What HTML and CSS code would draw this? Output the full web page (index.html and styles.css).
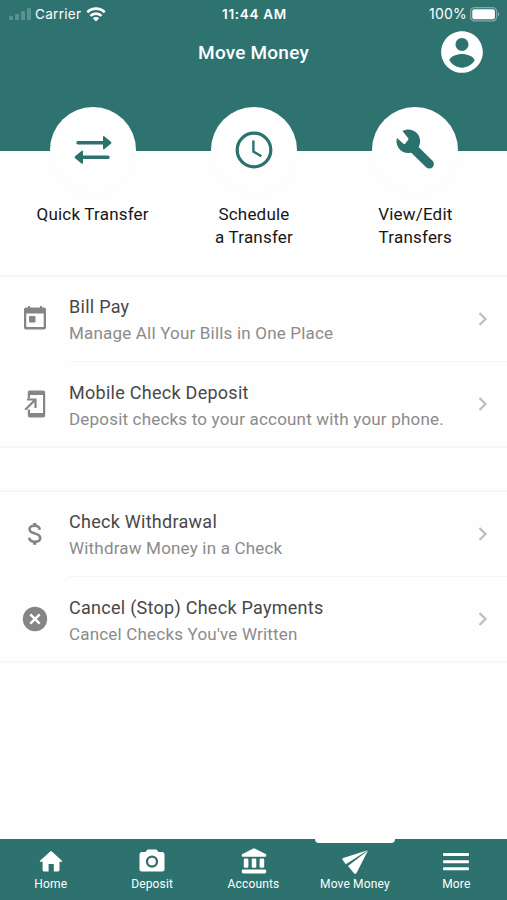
FILE: index.html
```html
<!DOCTYPE html>
<html lang="en">
<head>
  <meta charset="UTF-8" />
  <meta name="viewport" content="width=device-width, initial-scale=1" />
  <title>Move Money</title>
  <link rel="stylesheet" href="styles.css">
</head>
<body>

<div class="app">
  <header class="hero">
    <div class="status-bar">
      <div class="status-left">
        <svg class="signal" width="22" height="14" viewBox="0 0 22 14">
          <rect x="0" y="9" width="4" height="4" rx="1" />
          <rect x="6" y="7" width="4" height="6" rx="1" />
          <rect x="12" y="4" width="4" height="9" rx="1" />
          <rect x="18" y="1" width="4" height="12" rx="1" />
        </svg>
        <span class="carrier">Carrier</span>
        <svg class="wifi" width="20" height="15" viewBox="0 0 20 15" fill="none" stroke="#fff" stroke-width="2.7">
          <path d="M1.3 5.2a12.4 12.4 0 0 1 17.4 0" />
          <path d="M4.5 8.9a7.8 7.8 0 0 1 11 0" />
          <path d="M10 14.5l-3.2-3.3a4.6 4.6 0 0 1 6.4 0z" fill="#fff" stroke="none" />
        </svg>
      </div>
      <span class="time">11:44 AM</span>
      <div class="status-right">
        <span class="percent">100%</span>
        <svg class="battery" width="30" height="15" viewBox="0 0 30 15">
          <rect x=".6" y=".6" width="26" height="13.3" rx="4" fill="none" stroke="#82aba8" stroke-width="1.2" />
          <rect x="2.3" y="2.3" width="22.6" height="9.9" rx="2" fill="#fff" />
          <path d="M28 5a2.6 2.6 0 0 1 0 4.6z" fill="#82aba8" />
        </svg>
      </div>
    </div>
    <div class="title-bar">
      <h1>Move Money</h1>
      <svg class="avatar" width="50" height="50" viewBox="0 0 24 24" fill="#fff">
        <path d="M12 2C6.48 2 2 6.48 2 12s4.48 10 10 10 10-4.48 10-10S17.52 2 12 2zm0 3.3c1.7 0 3.1 1.4 3.1 3.1s-1.4 3.1-3.1 3.1-3.1-1.4-3.1-3.1S10.3 5.3 12 5.3zm0 14.2c-2.5 0-4.9-1.4-6.1-3.5.4-2 3.7-3.1 6.1-3.1s5.7 1.1 6.1 3.1c-1.2 2.1-3.6 3.5-6.1 3.5z" />
      </svg>
    </div>
  </header>

  <section class="actions">
    <a class="action" href="#">
      <span class="circle">
        <svg width="38" height="28" viewBox="0 1 38 28" fill="#2b716d">
          <path d="M4 6h25V2.200q0-2 1.500-.8l6.400 5.400q1 1 0 2l-6.400 5.300q-1.500 1.200-1.500-.8V9.500H4a1.750 1.750 0 0 1 0-3.500z" />
          <path d="M34 20.500H9v-3.800q0-2-1.500-.8l-6.400 5.400q-1 1 0 2l6.400 5.100q1.500 1 1.500-.8V24h25a1.750 1.750 0 0 0 0-3.500z" />
        </svg>
      </span>
      <span class="action-label">Quick Transfer</span>
    </a>
    <a class="action" href="#">
      <span class="circle">
        <svg width="38" height="38" viewBox="0 0 38 38" fill="none" stroke="#2b716d" stroke-width="3.2">
          <circle cx="19" cy="19" r="16.8" />
          <path d="M18.400 9.500v11l8 4.700" stroke-width="2.4" />
        </svg>
      </span>
      <span class="action-label">Schedule<br>a Transfer</span>
    </a>
    <a class="action" href="#">
      <span class="circle">
        <svg width="42" height="42" viewBox="0 0 42 42">
          <path d="M8.500 2l5.500 7q.8 1 .2 1.800l-2.800 3.600q-.9 1-2 .3L3 8.900A11.800 11.800 0 1 0 8.500 2z" fill="#2b716d" />
          <path d="M19 19l16.300 16" stroke="#2b716d" stroke-width="9.2" stroke-linecap="round" />
        </svg>
      </span>
      <span class="action-label">View/Edit<br>Transfers</span>
    </a>
  </section>

  <ul class="list">
    <li class="row">
      <svg class="row-icon" width="28" height="28" viewBox="0 1.5 28 28" fill="#858585">
        <path d="M7 2.500h2V4h10V2.500h2V4h2q2 0 2 2v18q0 2-2 2H5q-2 0-2-2V6q0-2 2-2h2zM5.300 10v13.600h17.400V10z" fill-rule="evenodd" />
        <rect x="8" y="12.5" width="6.5" height="6.5" rx="1" />
      </svg>
      <div class="row-body">
        <div class="row-text">
          <h2>Bill Pay</h2>
          <p>Manage All Your Bills in One Place</p>
        </div>
        <svg class="chevron" width="10" height="14" viewBox="0 0 10 14"><path d="M1.500 1l6 6-6 6" /></svg>
      </div>
    </li>
    <li class="row">
      <svg class="row-icon" width="28" height="28" viewBox="0 0 28 28" fill="#858585">
        <path d="M8.500.5H22q2.200 0 2.200 2.200v22.600q0 2.200-2.200 2.200H9q-2.200 0-2.200-2.200V19.500H9V23h13V5H9v3.500H6.800V2.500q0-2 1.700-2z" />
        <path d="M6 9.500h8.500v8.500M14 10L4.200 19.700" fill="none" stroke="#858585" stroke-width="2.2" />
      </svg>
      <div class="row-body">
        <div class="row-text">
          <h2>Mobile Check Deposit</h2>
          <p>Deposit checks to your account with your phone.</p>
        </div>
        <svg class="chevron" width="10" height="14" viewBox="0 0 10 14"><path d="M1.500 1l6 6-6 6" /></svg>
      </div>
    </li>
  </ul>

  <ul class="list">
    <li class="row">
      <svg class="row-icon" width="28" height="28" viewBox="0 0 28 28" fill="none" stroke="#858585" stroke-width="2.6">
        <path d="M18.800 9.700C18.400 7 16.500 5.800 13.600 5.800c-3 0-5 1.300-5 3.500 0 2.500 2 3.400 5.200 4.200 3.600.9 5.400 2 5.400 4.400s-2.200 3.800-5.300 3.800c-3.300 0-5.400-1.500-5.700-4.100" />
        <path d="M13.700 3v3M13.700 21.500v3.300" stroke-width="3.4" />
      </svg>
      <div class="row-body">
        <div class="row-text">
          <h2>Check Withdrawal</h2>
          <p>Withdraw Money in a Check</p>
        </div>
        <svg class="chevron" width="10" height="14" viewBox="0 0 10 14"><path d="M1.500 1l6 6-6 6" /></svg>
      </div>
    </li>
    <li class="row">
      <svg class="row-icon" width="28" height="28" viewBox="0 0 28 28">
        <circle cx="14" cy="14" r="12.2" fill="#858585" />
        <path d="M9.300 9.300l9.400 9.400M18.700 9.300l-9.400 9.400" stroke="#fff" stroke-width="2.5" />
      </svg>
      <div class="row-body">
        <div class="row-text">
          <h2>Cancel (Stop) Check Payments</h2>
          <p>Cancel Checks You've Written</p>
        </div>
        <svg class="chevron" width="10" height="14" viewBox="0 0 10 14"><path d="M1.500 1l6 6-6 6" /></svg>
      </div>
    </li>
  </ul>

  <nav class="tab-bar">
    <a class="tab" href="#">
      <svg width="28" height="28" viewBox="0 0 28 28" fill="#fff">
        <path d="M13.200 4.400q.8-.7 1.600 0L25 13.700q.9 1-.4 1.100H22.500V23q0 1.400-1.400 1.400h-4.300V17h-5.200v7.400H7q-1.400 0-1.400-1.400v-8.200H3.400q-1.300-.1-.4-1.100z" />
      </svg>
      <span>Home</span>
    </a>
    <a class="tab" href="#">
      <svg width="28" height="28" viewBox="0 0 28 28" fill="#fff">
        <path d="M9.500 2.500h9l2 2.400H24q2.500 0 2.500 2.500v14.500q0 2.500-2.500 2.500H4q-2.500 0-2.500-2.500V7.400q0-2.500 2.500-2.500h3.500z" />
        <circle cx="14" cy="14.600" r="5" fill="none" stroke="#2d726f" stroke-width="2.3" />
      </svg>
      <span>Deposit</span>
    </a>
    <a class="tab" href="#">
      <svg width="28" height="28" viewBox="0 0 28 28" fill="#fff">
        <path d="M13.400 1.500q.6-.3 1.200 0L25.600 7q.6.400.6 1v1q0 .8-.8.8H2.600q-.8 0-.8-.8V8q0-.6.6-1z" />
        <rect x="3.800" y="11.500" width="4.600" height="9.300" rx="1.300" />
        <rect x="11.700" y="11.500" width="4.600" height="9.300" rx="1.300" />
        <rect x="19.600" y="11.500" width="4.600" height="9.300" rx="1.300" />
        <rect x="1.800" y="22.600" width="24.400" height="3.800" rx="1.300" />
      </svg>
      <span>Accounts</span>
    </a>
    <a class="tab active" href="#">
      <svg width="28" height="28" viewBox="0 0 28 28" fill="#fff">
        <path d="M26.600 3.200L2.200 10.900q-1.400.7-.6 2l3.200 4.400z" />
        <path d="M27 3.400L15.400 26.200q-1 1.200-2.200.2L7 18.900z" />
      </svg>
      <span>Move Money</span>
    </a>
    <a class="tab" href="#">
      <svg width="28" height="28" viewBox="0 0 28 28" fill="#fff">
        <rect x="1" y="6" width="26" height="3" rx="1" />
        <rect x="1" y="13.200" width="26" height="3" rx="1" />
        <rect x="1" y="20.300" width="26" height="3" rx="1" />
      </svg>
      <span>More</span>
    </a>
  </nav>
</div>

</body>
</html>
```
FILE: styles.css
```css
* {
  box-sizing: border-box;
}

body {
  margin: 0;
  font-family: Roboto, "Liberation Sans", sans-serif;
  background: #fefefe;
}

a {
  color: inherit;
  text-decoration: none;
}

svg {
  display: block;
  flex: none;
}

.app {
  display: flex;
  flex-direction: column;
  height: 100vh;
  overflow: hidden;
}

.hero {
  flex: none;
  height: 151px;
  background: #2e7370;
  color: #fff;
}

.status-bar {
  display: grid;
  grid-template-columns: 1fr auto 1fr;
  align-items: center;
  height: 27px;
  padding: 0 7px 0 9px;
  font-family: Inter, "Liberation Sans", sans-serif;
  font-size: 13.5px;
  line-height: 28px;
}

.status-left,
.status-right {
  display: flex;
  align-items: center;
}

.status-right {
  justify-content: flex-end;
}

.signal {
  fill: #5b918e;
}

.carrier {
  margin: 0 5px 0 4px;
  letter-spacing: 0.3px;
}

.time {
  font-weight: 600;
  letter-spacing: 0.7px;
}

.percent {
  margin-right: 3px;
  font-size: 14px;
  letter-spacing: 0.2px;
}

.title-bar {
  display: grid;
  grid-template-columns: 1fr auto 1fr;
  align-items: center;
  height: 50px;
  padding: 0 20px;
}

.title-bar h1 {
  grid-column: 2;
  margin: 0;
  font-size: 19px;
  font-weight: 500;
  letter-spacing: 0.2px;
}

.avatar {
  justify-self: end;
}

.actions {
  display: flex;
  flex: none;
  height: 168px;
  margin-top: -44px;
  padding: 0 11px 0 12px;
}

.action {
  flex: 1;
  display: flex;
  flex-direction: column;
  align-items: center;
}

.circle {
  display: flex;
  align-items: center;
  justify-content: center;
  width: 86px;
  height: 86px;
  border-radius: 50%;
  background: #fefefe;
  box-shadow: 0 2px 4px rgba(0, 0, 0, 0.01);
}

.action-label {
  margin-top: 10px;
  font-size: 17px;
  line-height: 22.5px;
  letter-spacing: 0.2px;
  text-align: center;
  color: #161616;
}

.list {
  flex: none;
  margin: 0 0 42px;
  padding: 0;
  list-style: none;
  border-top: 2px solid #f7f7f7;
  border-bottom: 2px solid #f7f7f7;
}

.row {
  display: flex;
  align-items: center;
  height: 84px;
  padding-left: 21px;
}

.row + .row {
  height: 85px;
}

.row-body {
  flex: 1;
  display: flex;
  align-items: center;
  justify-content: space-between;
  height: 100%;
  margin-left: 20px;
  padding-right: 19px;
}

.row + .row .row-body {
  border-top: 1px solid #f4f4f4;
}

.row-text {
  padding-top: 2px;
}

.row + .row .row-text {
  padding-top: 3px;
}

.row h2,
.row p {
  margin: 0;
  line-height: 26px;
}

.row h2 {
  font-size: 18px;
  font-weight: 400;
  letter-spacing: 0.27px;
  color: #484848;
}

.row p {
  font-size: 17px;
  letter-spacing: 0.19px;
  color: #8b8b8b;
}

.chevron {
  fill: none;
  stroke: #bdbdbd;
  stroke-width: 2.2;
}

.tab-bar {
  display: flex;
  flex: none;
  height: 61px;
  margin-top: auto;
  background: #2d726f;
  color: #fff;
}

.tab {
  position: relative;
  flex: 1;
  display: flex;
  flex-direction: column;
  align-items: center;
  padding-top: 8px;
  font-size: 12px;
  line-height: 18px;
  letter-spacing: 0.15px;
}

/* notch over the selected tab */
.tab.active::before {
  content: "";
  position: absolute;
  top: 0;
  left: 50%;
  width: 80px;
  height: 4px;
  margin-left: -40px;
  border-radius: 0 0 4px 4px;
  background: #fefefe;
}
```
